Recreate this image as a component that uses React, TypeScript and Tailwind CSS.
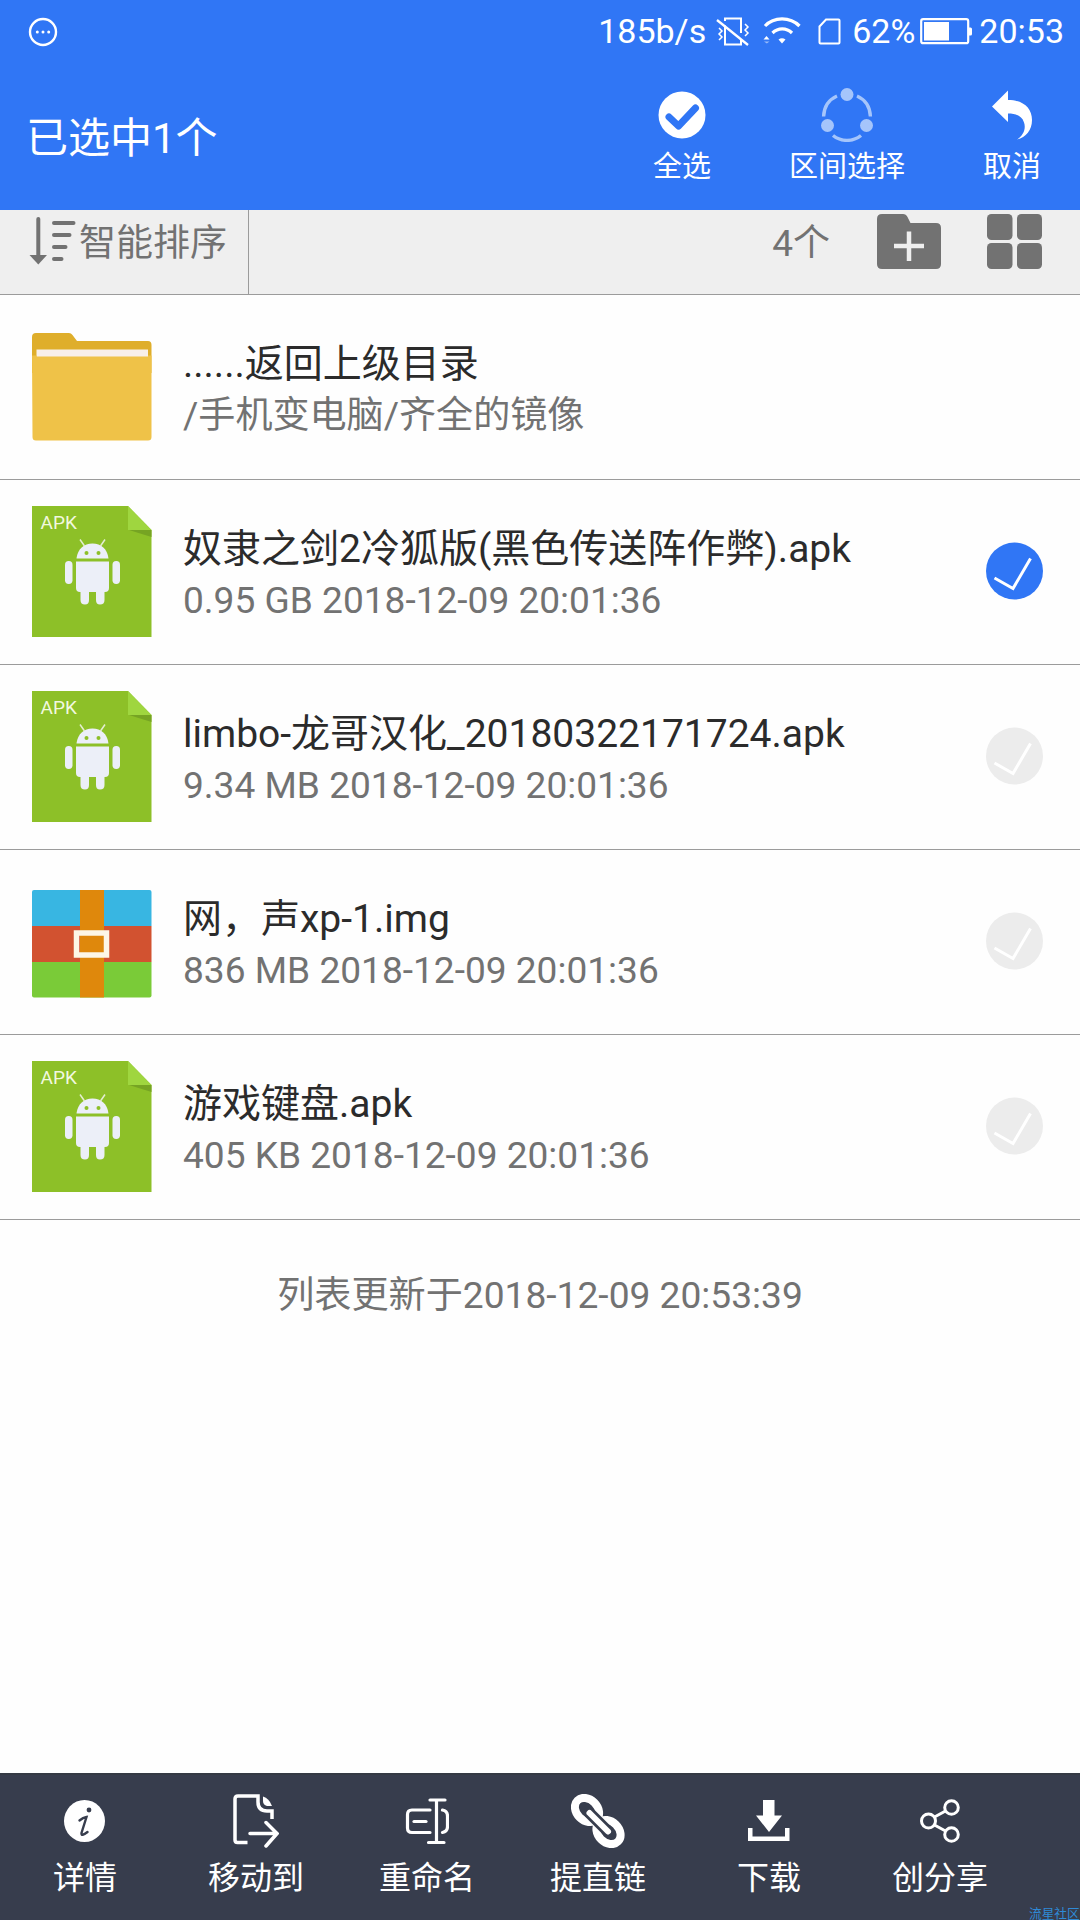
import type { ReactNode } from 'react';

type FileKind = 'folder' | 'apk' | 'archive';

interface FileItem {
  name: string;
  info: string;
  kind: FileKind;
  selected?: boolean;
}

const files: FileItem[] = [
  { name: '......返回上级目录', info: '/手机变电脑/齐全的镜像', kind: 'folder' },
  { name: '奴隶之剑2冷狐版(黑色传送阵作弊).apk', info: '0.95 GB 2018-12-09 20:01:36', kind: 'apk', selected: true },
  { name: 'limbo-龙哥汉化_20180322171724.apk', info: '9.34 MB 2018-12-09 20:01:36', kind: 'apk' },
  { name: '网，声xp-1.img', info: '836 MB 2018-12-09 20:01:36', kind: 'archive' },
  { name: '游戏键盘.apk', info: '405 KB 2018-12-09 20:01:36', kind: 'apk' },
];

export default function App() {
  return (
    <div
      lang="zh-CN"
      className="relative flex h-[1920px] w-[1080px] flex-col overflow-hidden bg-[#fefefe] font-['Roboto','Noto_Sans_CJK_SC',sans-serif]"
    >
      <StatusBar />
      <Header />
      <Toolbar />
      <main className="flex-1">
        {files.map((file) => (
          <FileRow key={file.name} file={file} />
        ))}
        <p className="mt-[51px] text-center text-[37.15px] leading-[50px] text-[#727272]">列表更新于2018-12-09 20:53:39</p>
      </main>
      <BottomBar />
      <span className="absolute top-[1907px] left-[1029px] text-[12.7px] leading-[13px] whitespace-nowrap text-[#2f8ad6]">流星社区</span>
    </div>
  );
}

function StatusBar() {
  return (
    <div className="flex h-16 shrink-0 items-center bg-[#3076f5] pr-[16px] pl-[28px] text-[34px] leading-[40px] text-white">
      <svg width="30" height="30" viewBox="0 0 30 30" fill="none">
        <circle cx="15" cy="15" r="13" stroke="#fff" strokeWidth="2.4" />
        <circle cx="9.3" cy="15" r="1.5" fill="#fff" />
        <circle cx="15" cy="15" r="1.5" fill="#fff" />
        <circle cx="20.7" cy="15" r="1.5" fill="#fff" />
      </svg>
      <span className="mb-[2px] ml-auto">185b/s</span>
      <svg className="mb-[1px] ml-[10px]" width="34" height="30" viewBox="0 0 34 30" fill="none" stroke="#fff" strokeWidth="2">
        <path d="M9 8.500V27.500H25V22M9 4V1.500H25V16" />
        <path d="M1 3L32 28" strokeWidth="2.300" />
        <path d="M3 11l3 3-3 3 3 3-3 3M29 7l3 3-3 3 3 3-3 3" strokeWidth="1.500" />
      </svg>
      <svg className="mb-[2px] ml-[13px]" width="38" height="28" viewBox="0 0 38 28" fill="none" stroke="#fff">
        <path d="M2 9C11 -0.500 27 -0.500 36.500 9" strokeWidth="3.200" />
        <path d="M9.500 16C15 10.500 23.500 10.500 29 16" strokeWidth="3.200" />
        <path d="M15.500 22.500Q19 20 22.500 22.500L19 26.500Z" fill="#fff" stroke="none" />
        <path d="M0.500 22.500L3.500 19L6.500 22.500Z" fill="#fff" stroke="none" />
        <path d="M1 24.500H6.500L3.800 26.500Z" fill="#fff" fillOpacity="0.500" stroke="none" />
      </svg>
      <svg className="mb-[2px] ml-[17px]" width="23" height="27" viewBox="0 0 23 27" fill="none" stroke="#fff" strokeWidth="2">
        <path d="M8 1.500H20.500Q21.500 1.500 21.500 2.500V24.500Q21.500 25.500 20.500 25.500H2.500Q1.500 25.500 1.500 24.500V8.500Z" />
      </svg>
      <span className="mb-[2px] ml-[11px]">62%</span>
      <svg className="mb-[2px] ml-[5px]" width="53" height="27" viewBox="0 0 53 27" fill="none">
        <rect x="1.200" y="1.200" width="47" height="24" rx="2" stroke="#fff" strokeWidth="2.200" />
        <rect x="4" y="4" width="25" height="18.500" fill="#fff" />
        <path d="M49 9.500H50.500Q52 9.500 52 11V16Q52 17.500 50.500 17.500H49Z" fill="#fff" />
      </svg>
      <span className="mb-[2px] ml-[6px]">20:53</span>
    </div>
  );
}

function Header() {
  return (
    <header className="flex h-[146px] shrink-0 bg-[#3076f5] pr-[39px] pl-[26px] text-white">
      <h1 className="mt-[47px] text-[42px] leading-[56px]">已选中1个</h1>
      <div className="mt-[21px] ml-auto flex gap-[78px]">
        <HeaderAction label="全选">
          <svg width="48" height="48" viewBox="0 0 48 48">
            <circle cx="24" cy="24" r="23.500" fill="#fff" />
            <path d="M11 26L20.500 35L37.500 17" fill="none" stroke="#3076f5" strokeWidth="7" strokeLinecap="round" strokeLinejoin="round" />
          </svg>
        </HeaderAction>
        <HeaderAction label="区间选择">
          <svg width="52" height="54" viewBox="0 0 52 54" fill="none" stroke="#a5c5fb" strokeWidth="3.400">
            <path d="M2.600 28.500C3 19 8 11.500 16 8M36 8C44 11.500 49 19 49.400 28.500M12 47.500C20 54 32 54 40 47.500" />
            <g fill="#a5c5fb" stroke="none">
              <circle cx="26" cy="6.500" r="6.500" />
              <circle cx="6.500" cy="37.500" r="6.500" />
              <circle cx="45.500" cy="37.500" r="6.500" />
            </g>
          </svg>
        </HeaderAction>
        <HeaderAction label="取消">
          <svg width="42" height="50" viewBox="0 0 42 50" fill="#fff">
            <path d="M1 16.500L17 0.500V10C32 10 41 18 41 30C41 40 35 47.500 26 49.500C33 45 35 38 33 32.500C31 26 25 23.500 17 23.500V32Z" />
          </svg>
        </HeaderAction>
      </div>
    </header>
  );
}

function HeaderAction({ label, children }: { label: string; children: ReactNode }) {
  return (
    <button className="flex flex-col items-center">
      <span className="flex h-[60px] items-center">{children}</span>
      <span className="mt-1 text-[29px] leading-[36px]">{label}</span>
    </button>
  );
}

function Toolbar() {
  return (
    <div className="flex h-[85px] shrink-0 border-b border-[#9b9b9b] bg-[#efefef] pr-[38px] text-[37px] leading-[50px] text-[#727272]">
      <div className="flex w-[249px] border-r border-[#9b9b9b] pl-[29px]">
        <svg className="mt-[7px]" width="48" height="48" viewBox="0 0 48 48" fill="none" stroke="#727272" strokeWidth="4" strokeLinecap="round">
          <path d="M9.300 2V40" />
          <path d="M0.500 38H18L9.300 47.500Z" fill="#727272" stroke="none" />
          <path d="M25 6H44.500M25 18H40.500M25 30H36.500M25 42H32.500" />
        </svg>
        <span className="mt-[9px] ml-[2px]">智能排序</span>
      </div>
      <span className="mt-[9px] ml-auto">4个</span>
      <svg className="mt-1 ml-[47px]" width="64" height="56" viewBox="0 0 64 56">
        <path d="M5 0H26Q29 0 30.500 3L33.500 9H59Q64 9 64 14V50Q64 55 59 55H5Q0 55 0 50V5Q0 0 5 0Z" fill="#727272" />
        <path d="M32 17.500V47M17 32H47" stroke="#efefef" strokeWidth="4.500" />
      </svg>
      <svg className="mt-1 ml-[46px]" width="55" height="56" viewBox="0 0 55 56" fill="#727272">
        <rect width="25.500" height="26" rx="4.500" />
        <rect x="30" width="25" height="26" rx="4.500" />
        <rect y="29" width="25.500" height="26" rx="4.500" />
        <rect x="30" y="29" width="25" height="26" rx="4.500" />
      </svg>
    </div>
  );
}

function FileRow({ file }: { file: FileItem }) {
  return (
    <div className="flex h-[185px] border-b border-[#9b9b9b] pr-[37px] pl-[32px]">
      <div className="flex w-[120px] shrink-0 items-center">
        {file.kind === 'folder' && <FolderIcon />}
        {file.kind === 'apk' && <ApkIcon />}
        {file.kind === 'archive' && <ArchiveIcon />}
      </div>
      <div className="mt-[43px] ml-[31px] flex-1 whitespace-nowrap">
        <div className="text-[39px] leading-[52px] text-[#2b2b2b]">{file.name}</div>
        <div className="text-[37.1px] leading-[52px] text-[#727272]">{file.info}</div>
      </div>
      {file.kind !== 'folder' && (
        <svg className="mt-[62px]" width="57" height="58" viewBox="0 0 57 58" fill="none">
          <circle cx="28.500" cy="29" r="28.500" fill={file.selected ? '#3076f5' : '#ececec'} />
          <path d="M8.500 36L27 46.500L44.500 16.500" stroke="#fff" strokeWidth="3" />
        </svg>
      )}
    </div>
  );
}

function FolderIcon() {
  return (
    <svg width="120" height="108" viewBox="0 0 120 108">
      <path d="M4 0H37Q39 0 40.500 2L45 8H116Q119.500 8 119.500 12V40H0V4Q0 0 4 0Z" fill="#dfae2b" />
      <rect x="4.500" y="16.500" width="111.500" height="20" fill="#f8efe9" />
      <path d="M0 22.500H4.500V23.500H116V22.500H119.500V104Q119.500 107.500 116 107.500H4Q0.500 107.500 0.500 104Z" fill="#efc248" />
    </svg>
  );
}

function ApkIcon() {
  return (
    <svg className="mb-[2px]" width="120" height="131" viewBox="0 0 120 131">
      <path d="M0 0H96L119.500 24V131H0Z" fill="#8dc028" />
      <path d="M97 24H119.500V31Z" fill="#76a423" />
      <path d="M96 0L119.500 24H96Z" fill="#9fd63f" />
      <text x="8.500" y="22.500" className="font-['Roboto',sans-serif] text-[19px]" fill="#f1f8df">APK</text>
      <g fill="#eceff8">
        <path d="M44.500 52.500C45.500 43 52 37.500 60.500 37.500C69 37.500 75.500 43 76.500 52.500Z" />
        <path d="M44 55.500H77V82Q77 86 73 86H72.500V94Q72.500 98.500 68 98.500Q64 98.500 64 94V86H57V94Q57 98.500 53 98.500Q48.500 98.500 48.500 94V86H48Q44 86 44 82Z" />
        <rect x="33" y="55" width="7.500" height="23" rx="3.700" />
        <rect x="80.500" y="55" width="7.500" height="23" rx="3.700" />
      </g>
      <path d="M52.500 40L48 33.500M68.500 40L73 33.500" stroke="#e4edd2" strokeWidth="1.500" />
      <circle cx="54.500" cy="47" r="2" fill="#8dc028" />
      <circle cx="66.500" cy="47" r="2" fill="#8dc028" />
    </svg>
  );
}

function ArchiveIcon() {
  return (
    <svg className="mt-[3px]" width="120" height="108" viewBox="0 0 120 108">
      <path d="M2 0H117.500Q119.500 0 119.500 2V36H0V2Q0 0 2 0Z" fill="#38b6e2" />
      <rect y="36" width="119.500" height="36" fill="#d25230" />
      <path d="M0 72H119.500V105.500Q119.500 107.500 117.500 107.500H2Q0 107.500 0 105.500Z" fill="#7acb38" />
      <rect x="48" width="24" height="107.500" fill="#df880c" />
      <rect x="44.500" y="43" width="30" height="22" fill="none" stroke="#fdf6e6" strokeWidth="5.500" />
    </svg>
  );
}

function BottomBar() {
  return (
    <nav className="flex h-[147px] shrink-0 border-t-2 border-[#343a44] bg-[#373d4d] text-white">
      <NavItem label="详情">
        <svg width="42" height="43" viewBox="0 0 42 43">
          <ellipse cx="20.500" cy="21" rx="20.500" ry="21" fill="#fff" />
          <circle cx="25" cy="10" r="2.400" fill="#373d4d" />
          <path d="M15.500 20.500Q19 17.500 22.500 17L17.500 33Q17 37 23.500 32" fill="none" stroke="#373d4d" strokeWidth="2.400" strokeLinecap="round" />
        </svg>
      </NavItem>
      <NavItem label="移动到">
        <svg width="46" height="54" viewBox="0 0 46 54" fill="none" stroke="#fff" strokeWidth="3.500" strokeLinecap="round">
          <path d="M14.500 48.500H4.500Q2 48.500 2 46V5Q2 2 5 2H25V8Q25 17 34 17H39V25" strokeLinecap="butt" />
          <path d="M30 2.500Q36 4 39 12H34Q30 11 30 7Z" fill="#fff" stroke="none" />
          <path d="M17 39.500H43M33 28.500L44 39.500L33 52" />
        </svg>
      </NavItem>
      <NavItem label="重命名">
        <svg width="44" height="48" viewBox="0 0 44 48" fill="none" stroke="#fff" strokeWidth="3.200" strokeLinecap="round">
          <path d="M25 13H7Q2.500 13 2.500 17.500V31Q2.500 35.500 7 35.500H25M37.500 13Q42.500 14 42.500 19V29.500Q42.500 34.500 37.500 35.500" />
          <path d="M9 24.500H21" />
          <path d="M31.500 3V45.500M25 3H40M23.500 45.500H39" />
        </svg>
      </NavItem>
      <NavItem label="提直链">
        <svg width="54" height="54" viewBox="0 0 54 54" fill="none" strokeLinecap="round">
          <ellipse cx="16" cy="16" rx="13.500" ry="10.500" transform="rotate(45 16 16)" stroke="#fff" strokeWidth="8" />
          <ellipse cx="37.500" cy="38" rx="13.500" ry="10.500" transform="rotate(45 37.500 38)" stroke="#fff" strokeWidth="8" />
          <path d="M18.500 19L37 37.500" stroke="#373d4d" strokeWidth="11.500" />
          <path d="M18.500 19L37 37.500" stroke="#fff" strokeWidth="6" />
        </svg>
      </NavItem>
      <NavItem label="下载">
        <svg width="42" height="42" viewBox="0 0 42 42" fill="#fff">
          <path d="M15 0H26.500V15.500H34L21 32L8 15.500H15Z" />
          <path d="M0 28H4.500V36.500H37V28H41.500V41H0Z" />
        </svg>
      </NavItem>
      <NavItem label="创分享">
        <svg width="40" height="44" viewBox="0 0 40 44" fill="none" stroke="#fff" strokeWidth="3">
          <circle cx="8.500" cy="22" r="7" />
          <circle cx="31.500" cy="8.500" r="6.800" />
          <circle cx="31.500" cy="35.500" r="6.800" />
          <path d="M14.500 18L25.500 12M14.500 26L25.500 32" />
        </svg>
      </NavItem>
    </nav>
  );
}

function NavItem({ label, children }: { label: string; children: ReactNode }) {
  return (
    <button className="flex w-[171px] flex-col items-center pt-[16px] pr-[1px]">
      <span className="flex h-[60px] items-center">{children}</span>
      <span className="mt-[6px] text-[32px] leading-[42px]">{label}</span>
    </button>
  );
}
